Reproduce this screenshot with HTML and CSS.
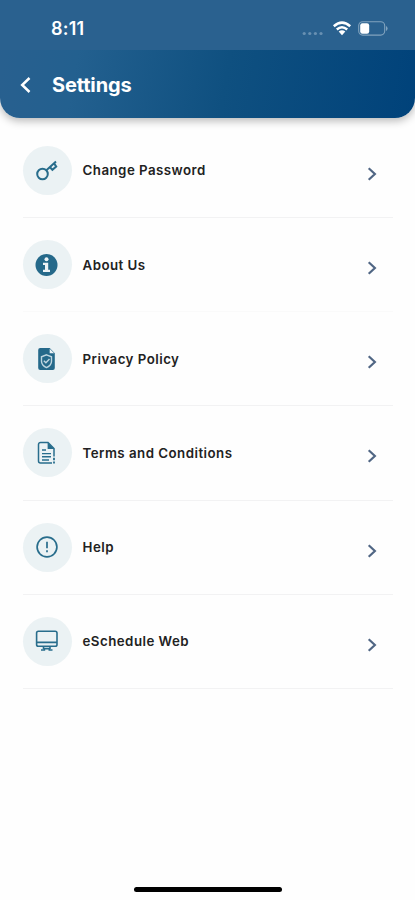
FILE: index.html
```html
<!DOCTYPE html>
<html lang="en">
<head>
<meta charset="utf-8">
<title>Settings</title>
<link rel="stylesheet" href="styles.css">
</head>
<body>
<div class="screen">
  <header class="header">
    <div class="status">
      <span class="time">8:11</span>
      <div class="indicators">
        <svg class="dots" width="22" height="5" viewBox="0 0 22 5"><circle cx="2.2" cy="2.5" r="1.6"/><circle cx="7.8" cy="2.5" r="1.6"/><circle cx="13.4" cy="2.5" r="1.6"/><circle cx="19" cy="2.5" r="1.6"/></svg>
        <svg class="wifi" width="20" height="15" viewBox="0 0 20 15"><path d="M1.8 5.2Q10-2 18.2 5.2M4.8 8.5Q10 4 15.2 8.5" fill="none" stroke="#fff" stroke-width="2.5"/><path d="M6.7 10.6Q10 7.9 13.3 10.6L10 14.2Z" fill="#fff"/></svg>
        <svg class="battery" width="30" height="15" viewBox="0 0 30 15"><rect x=".7" y=".7" width="26" height="13.4" rx="4" fill="none" stroke="#81a3be" stroke-width="1.1"/><path d="M28 5v5q1.6-.8 1.6-2.5T28 5" fill="#81a3be"/><rect x="2.2" y="2.3" width="9" height="10.4" rx="2.2" fill="#fff"/></svg>
      </div>
    </div>
    <div class="titlebar">
      <svg class="back" width="12" height="18" viewBox="0 0 12 18"><path d="M9.5 2L2.2 9l7.3 7" fill="none" stroke="#fff" stroke-width="2.5"/></svg>
      <h1>Settings</h1>
    </div>
  </header>

  <main class="list">
    <a class="row">
      <span class="badge"><svg width="24" height="24" viewBox="0 0 24 24"><g fill="none" stroke="#286d8c" stroke-width="2"><circle cx="7.5" cy="16" r="5.3"/><path d="M11.4 12.2L21 3.5M14.8 9l2.6 2.8 3.8-3.3-1.8-2.6"/></g></svg></span>
      <span class="label">Change Password</span>
      <svg class="chevron" width="10" height="14" viewBox="0 0 10 14"><path d="M1.7 1.2L7.9 7l-6.2 5.8"/></svg>
    </a>
    <a class="row faint">
      <span class="badge"><svg width="24" height="24" viewBox="0 0 24 24"><circle cx="11.5" cy="12" r="11" fill="#25698a"/><circle cx="11.5" cy="6.3" r="2" fill="#edf3f6"/><path d="M8 9.8h5.2v7H15V19H8v-2.2h2V12H8z" fill="#edf3f6"/></svg></span>
      <span class="label">About Us</span>
      <svg class="chevron" width="10" height="14" viewBox="0 0 10 14"><path d="M1.7 1.2L7.9 7l-6.2 5.8"/></svg>
    </a>
    <a class="row">
      <span class="badge"><svg width="24" height="24" viewBox="0 0 24 24"><path d="M5.2 1h9.5l5.1 5.2V21a2 2 0 0 1-2 2H5.2a2 2 0 0 1-2-2V3a2 2 0 0 1 2-2z" fill="#25698a"/><path d="M14.7 1.8v4.5h4.5z" fill="#edf3f6"/><g fill="none" stroke="#bfd6e0" stroke-width="1.4"><path d="M11.5 7.8l5 2v4.4c0 3-2 5-5 6.4-3-1.4-5-3.4-5-6.4V9.8z"/><path d="M8.8 13.8l2.1 2 3.6-3.8"/></g></svg></span>
      <span class="label">Privacy Policy</span>
      <svg class="chevron" width="10" height="14" viewBox="0 0 10 14"><path d="M1.7 1.2L7.9 7l-6.2 5.8"/></svg>
    </a>
    <a class="row">
      <span class="badge"><svg width="24" height="24" viewBox="0 0 24 24"><path d="M17 22H5.5a2 2 0 0 1-2-2V3.5a2 2 0 0 1 2-2H13l6 6v8" fill="none" stroke="#286d8c" stroke-width="1.5"/><path d="M12.6 1.5v6.6h6.8z" fill="#286d8c"/><path d="M7 9h4M7 12.6h9M7 15.8h9M7 19h7" stroke="#286d8c" stroke-width="1.4"/><path d="M19 16.8v2.4M19 20.6v2" stroke="#286d8c" stroke-width="1.8"/></svg></span>
      <span class="label">Terms and Conditions</span>
      <svg class="chevron" width="10" height="14" viewBox="0 0 10 14"><path d="M1.7 1.2L7.9 7l-6.2 5.8"/></svg>
    </a>
    <a class="row">
      <span class="badge"><svg width="24" height="24" viewBox="0 0 24 24"><g fill="none" stroke="#286d8c" stroke-width="1.7"><circle cx="12" cy="12" r="9.9"/><path d="M12 6.8v6.4M12 15.2v2"/></g></svg></span>
      <span class="label">Help</span>
      <svg class="chevron" width="10" height="14" viewBox="0 0 10 14"><path d="M1.7 1.2L7.9 7l-6.2 5.8"/></svg>
    </a>
    <a class="row">
      <span class="badge"><svg width="24" height="24" viewBox="0 0 24 24"><g fill="none" stroke="#286d8c" stroke-width="1.6"><rect x="1.6" y="2.3" width="20.4" height="15" rx="1.8"/><path d="M1.6 13.4H22M8.5 17.5v2.5M15 17.5v2.5M6 21h3.4v-1.4h4.9V21h3.2"/></g></svg></span>
      <span class="label">eSchedule Web</span>
      <svg class="chevron" width="10" height="14" viewBox="0 0 10 14"><path d="M1.7 1.2L7.9 7l-6.2 5.8"/></svg>
    </a>
  </main>
  <div class="home"></div>
</div>
</body>
</html>
```
FILE: styles.css
```css
* { box-sizing: border-box; }
body { margin: 0; background: #fefefe; font-family: Inter, "Liberation Sans", sans-serif; }
.screen { width: 415px; height: 900px; display: flex; flex-direction: column; }
.header {
  height: 118px;
  border-radius: 0 0 20px 20px;
  overflow: hidden;
  background: linear-gradient(100deg, #29608f 0%, #23608f 20%, #0f5080 55%, #00427a 100%);
  box-shadow: 0 3px 8px rgba(0, 0, 0, .28);
  color: #fff;
}
.status {
  height: 50px;
  padding: 7px 27px 0 51px;
  display: flex;
  align-items: center;
  justify-content: space-between;
  background: #2a618f;
}
.time { font-size: 18px; font-weight: 600; line-height: 22px; letter-spacing: .2px; }
.indicators { display: flex; align-items: center; }
.dots { fill: #6890b2; margin: 9px 8px 0 0; }
.wifi { margin-right: 6px; }
.titlebar { height: 69px; padding-left: 20px; display: flex; align-items: center; }
h1 { margin: 0 0 0 20px; font-size: 20px; line-height: 26px; font-weight: 700; letter-spacing: -.15px; }
.list { padding: 5.8px 22px 0 22.5px; flex: 1; }
.row {
  height: 94.2px;
  display: flex;
  align-items: center;
  border-bottom: 1.5px solid #f2f2f3;
}
.faint { border-color: #fafafa; }
.badge {
  width: 49px;
  height: 49px;
  border-radius: 50%;
  background: #ebf2f4;
  display: flex;
  align-items: center;
  justify-content: center;
}
.label {
  margin-left: 11px;
  flex: 1;
  font-size: 13.3px;
  line-height: 20px;
  font-weight: 600;
  color: #222;
  letter-spacing: .47px;
}
.chevron { margin: 7px 16px 0 0; fill: none; stroke: #506684; stroke-width: 2.2; }
.home { width: 148px; height: 5px; margin: 0 auto 8px; border-radius: 3px; background: #000; }
```
